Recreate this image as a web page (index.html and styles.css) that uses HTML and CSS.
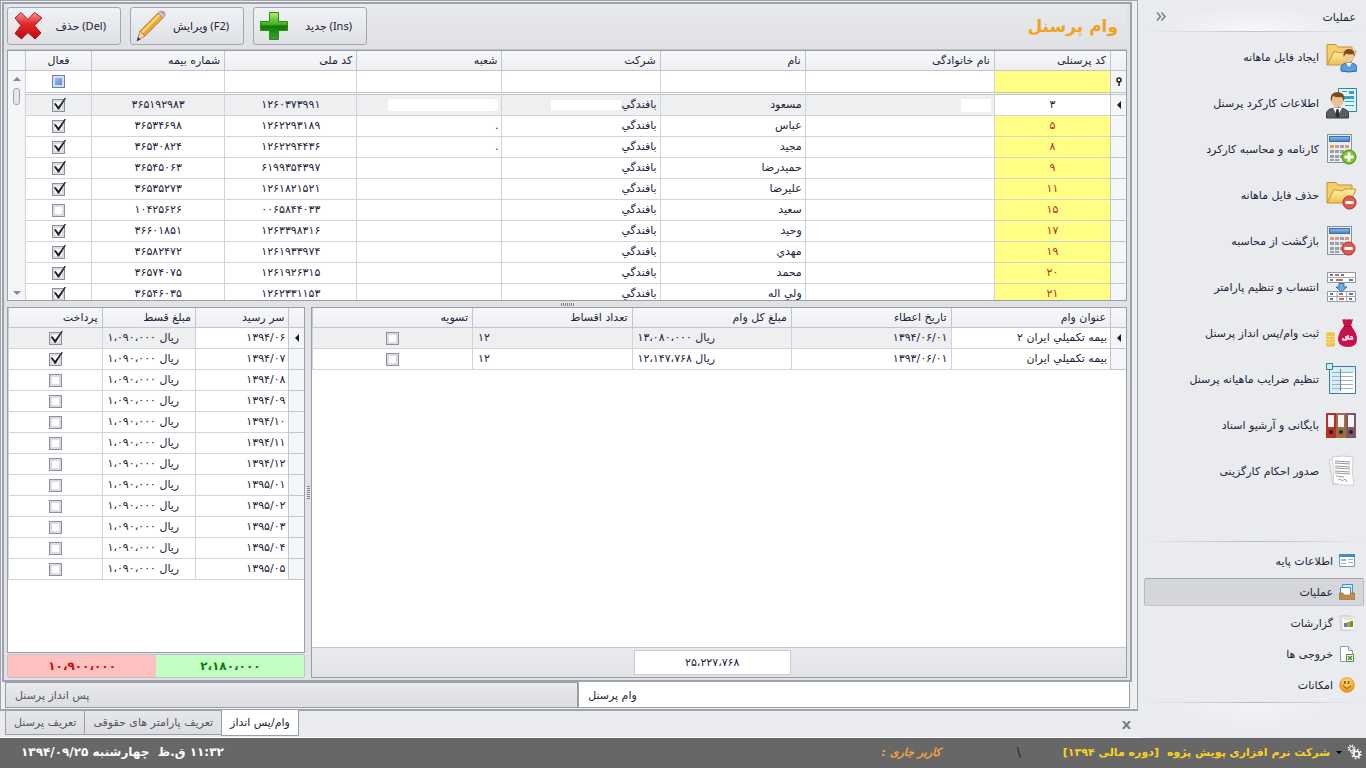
FILE: index.html
```html
<!DOCTYPE html>
<html lang="fa" dir="rtl">
<head>
  <meta charset="UTF-8" />
  <meta name="viewport" content="width=device-width, initial-scale=1.0" />
  <title>وام پرسنل</title>
  <link rel="stylesheet" href="styles.css">
</head>
<body>

  <svg class="defs" aria-hidden="true">
    <defs>
      <linearGradient id="gFolder" x1="0" y1="0" x2="0" y2="1"><stop offset="0" stop-color="#fdf0ae"/><stop offset="1" stop-color="#efc04c"/></linearGradient>
      <linearGradient id="gGreen" x1="0" y1="0" x2="0" y2="1"><stop offset="0" stop-color="#b5ee70"/><stop offset=".45" stop-color="#3fae1c"/><stop offset=".5" stop-color="#0f7a06"/><stop offset="1" stop-color="#3aa52a"/></linearGradient>
      <linearGradient id="gRed" x1="0" y1="0" x2="0" y2="1"><stop offset="0" stop-color="#f79a9a"/><stop offset=".4" stop-color="#e32c2c"/><stop offset="1" stop-color="#c40808"/></linearGradient>
      <linearGradient id="gBlue" x1="0" y1="0" x2="0" y2="1"><stop offset="0" stop-color="#8dc0f0"/><stop offset="1" stop-color="#3f7fc6"/></linearGradient>
      <radialGradient id="gSmile" cx=".5" cy=".3" r=".7"><stop offset="0" stop-color="#ffe27a"/><stop offset="1" stop-color="#ee8a12"/></radialGradient>
      <symbol id="folder" viewBox="0 0 32 32">
        <path d="M2 24V3.500h9l2 2.500h14v6" fill="#f3cf69" stroke="#c2933a"/>
        <path d="M2 24 9 10.500l8 1.500 3-2h11l-6 14z" fill="url(#gFolder)" stroke="#c2933a"/>
      </symbol>
      <symbol id="calc" viewBox="0 0 32 32">
        <rect x="2.500" y="1.500" width="24" height="28" fill="#e9edf1" stroke="#8b949e"/>
        <rect x="4.500" y="3.500" width="20" height="5" fill="url(#gBlue)" stroke="#3f6f9f"/>
        <path d="M5 12h4v3H5zM15 12h4v3h-4zM5 17h4v3H5zM10 17h4v3h-4zM15 17h4v3h-4zM20 17h4v3h-4zM5 22h4v3H5zM10 22h4v3h-4zM15 22h4v3h-4zM5 26h4v2H5zM10 26h4v2h-4z" fill="#9aa0a8"/>
        <path d="M5 12h4v3H5zM10 12h4v3h-4zM20 12h4v3h-4z" fill="#e09a70"/>
      </symbol>
      <symbol id="minus" viewBox="0 0 16 16">
        <circle cx="8" cy="8" r="7" fill="#e2594c" stroke="#a8342c"/>
        <rect x="3.500" y="6.500" width="9" height="3" rx="1" fill="#fff"/>
      </symbol>
      <symbol id="plus" viewBox="0 0 16 16">
        <circle cx="8" cy="8" r="7" fill="#7cc326" stroke="#4a8a14"/>
        <path d="M6.500 3.500h3v3h3v3h-3v3h-3v-3h-3v-3h3z" fill="#fff"/>
      </symbol>
    </defs>
  </svg>

  <div class="app">

    <aside class="sidebar">
      <div class="sidebar-head">
        <h2>عملیات</h2>
        <button type="button" class="collapse" aria-label="جمع کردن">
          <svg width="10" height="9" viewBox="0 0 10 9"><path d="M1 .5 4.500 4.500 1 8.500M5.500.5 9 4.500 5.500 8.500" fill="none" stroke="#777b85" stroke-width="1.500"/></svg>
        </button>
      </div>

      <nav class="actions">
        <a href="#">
          <svg class="icon" viewBox="0 0 32 32"><use href="#folder" width="32" height="32"/><path d="M16 30v-4q1-4 8-4t8 4v4q-8 2-16 0z" fill="#5b9ee0" stroke="#2d65a8"/><path d="m21 22 3 4 3-4z" fill="#fff"/><circle cx="24" cy="15.500" r="5" fill="#f2c79a"/><path d="M18.500 16q-.5-8 5.500-8t5.500 8l-1.500-3q-4 1-7-.5z" fill="#7b4a1d"/></svg>
          <span>ایجاد فایل ماهانه</span>
        </a>
        <a href="#">
          <svg class="icon" viewBox="0 0 32 32"><path d="M13.500 1.500h18v23h-18z" fill="#dff4fb" stroke="#2d86a8"/><path d="M17 4h5v1h-5zM24 4h5v3h-5zM17 9h12v3H17zM20 14h9v1h-9zM20 18h9v1h-9z" fill="#2fa3c4"/><path d="M1.500 31v-5q1-5 11-5t11 5v5z" fill="#5a5d62" stroke="#3a3c40"/><path d="m8 21 4.500 8 4.500-8z" fill="#fff"/><path d="m11.500 22-1 7 2 2 2-2-1-7z" fill="#2b2d31"/><circle cx="12.500" cy="14" r="6" fill="#eebf91"/><path d="M6 15Q4 5 12.500 5T19 15l-2-5q-5 1-9-1z" fill="#7b4a1d"/></svg>
          <span>اطلاعات کارکرد پرسنل</span>
        </a>
        <a href="#">
          <svg class="icon" viewBox="0 0 32 32"><use href="#calc" width="32" height="32"/><use href="#plus" x="16" y="16" width="16" height="16"/></svg>
          <span>کارنامه و محاسبه کارکرد</span>
        </a>
        <a href="#">
          <svg class="icon" viewBox="0 0 32 32"><use href="#folder" width="32" height="32"/><use href="#minus" x="17" y="16" width="15" height="15"/></svg>
          <span>حذف فایل ماهانه</span>
        </a>
        <a href="#">
          <svg class="icon" viewBox="0 0 32 32"><use href="#calc" width="32" height="32"/><use href="#minus" x="16" y="16" width="15" height="15"/></svg>
          <span>بازگشت از محاسبه</span>
        </a>
        <a href="#">
          <svg class="icon" viewBox="0 0 32 32"><path d="M2.500 1.500h28v10h-28zM2.500 20.500h28v10h-28z" fill="#fff" stroke="#95989d"/><path d="M2 6.500h29M2 25.500h29M12 20v11M21.500 20v11" stroke="#a4a7ac"/><path d="M5 4h3M16 4h3M5 9h3M24 9h4M5 23h3M24 23h4M5 28h3M24 28h3" stroke="#234f7f" stroke-width="1.500"/><path d="M10 4h4M11 9h7M14 23h4M14 28h5" stroke="#b8392a" stroke-width="1.500"/><path d="M14 12.500h5v3.500h3l-5.500 5-5.500-5h3z" fill="#68aee3" stroke="#2f74ad"/></svg>
          <span>انتساب و تنظیم پارامتر</span>
        </a>
        <a href="#">
          <svg class="icon" viewBox="0 0 32 32"><path d="M1 16q4-2 9 0v13q-5 2-9 0z" fill="#efc746"/><path d="M1 19q4 2 9 0M1 22q4 2 9 0M1 25q4 2 9 0" fill="none" stroke="#f8e39a"/><path d="M17 2q2 1 3 0 2 1 4 0 2 1 4 0l-2 7q6 7 6 13 0 8-9 8t-10-7q0-7 6-14z" fill="#c8104c"/><path d="M19 9.500h8" stroke="#8e0833"/><path d="M18 21v2h3v-4M23 18v5M25 20q3-1 2.500 2H24" fill="none" stroke="#fff" stroke-width="1.500"/></svg>
          <span>ثبت وام/پس انداز پرسنل</span>
        </a>
        <a href="#">
          <svg class="icon" viewBox="0 0 32 32"><path d="M4.500 3.500h26v27h-26z" fill="#fff" stroke="#3d7d9b"/><path d="M5 4h25v5H5zM5 9h10v21H5z" fill="#d3edf9"/><path d="M7 9.500h21M7 13.500h21M7 17.500h21M7 21.500h21M7 25.500h21" stroke="#9db4bf"/><path d="M15.500 6v22" stroke="#6d8794"/><path d="M1.500.5h6v6h-6z" fill="#c6ecfb" stroke="#3d7d9b"/></svg>
          <span>تنظیم ضرایب ماهیانه پرسنل</span>
        </a>
        <a href="#">
          <svg class="icon" viewBox="0 0 32 32"><path d="M1 4h10v25H1z" fill="#b5302f"/><path d="M11 4h10v25H11z" fill="#9a7140"/><path d="M21 4h10v25H21z" fill="#7d566c"/><path d="M3 6h6v12H3zM13 6h6v12h-6zM23 6h6v12h-6z" fill="#f3f3f3"/><g fill="#2b2022"><circle cx="6" cy="23" r="2"/><circle cx="16" cy="23" r="2"/><circle cx="26" cy="23" r="2"/></g></svg>
          <span>بایگانی و آرشیو اسناد</span>
        </a>
        <a href="#">
          <svg class="icon" viewBox="0 0 32 32"><path d="m4 5 18-4 4 25-18 4z" fill="#f4f4f4" stroke="#c9cacc"/><path d="M7 2q11-2 21 0-2 14 1 28-12 1-21-2 2-12-1-26z" fill="#fff" stroke="#cfd0d2"/><path d="m10 6 15 1M10 8l15 1M10 11l15 1M10 13l15 1M10 16l15 1M10 18l15 1M11 21l8 1M13 25q2-2 3 0t4-1l2 3" fill="none" stroke="#999"/></svg>
          <span>صدور احکام کارگزینی</span>
        </a>
      </nav>

      <nav class="groups">
        <a href="#">
          <svg class="icon-sm" viewBox="0 0 16 16"><path d="M.5 1.500h15v12H.5z" fill="#fff" stroke="#7b9bb0"/><path d="M0 1h16v3H0z" fill="#3e90c4"/><path d="M2 6h5v2H2zM9 6h5v1H9zM9 9h5v1H9zM2 10h5v1H2z" fill="#9fb3c2"/></svg>
          <span>اطلاعات پایه</span>
        </a>
        <a href="#" class="active">
          <svg class="icon-sm" viewBox="0 0 16 16"><path d="M3.500.5h10v9h-10z" fill="#cfe8f8" stroke="#4a92c2"/><path d="M1.500 3.500h10v8h-10z" fill="#fff" stroke="#4a92c2"/><path d="M0 9h4l1 2h6l1-2h4v6.500H0z" fill="#c48a4c" stroke="#8f5f2d" stroke-width=".5"/></svg>
          <span>عملیات</span>
        </a>
        <a href="#">
          <svg class="icon-sm" viewBox="0 0 16 16"><path d="m0 1 11-1 1 15-10 1z" fill="#e4e4e4" stroke="#c0c0c0" stroke-width=".5"/><path d="M3 2h13v13H3z" fill="#fafafa" stroke="#b8b8b8" stroke-width=".5"/><path d="M5 8h3v4H5z" fill="#3a8fc0"/><path d="M8 7h3v5H8z" fill="#e08a2c"/><path d="M11 6h3v6h-3z" fill="#5ca03c"/><path d="M5 4h9" stroke="#c8c8c8"/></svg>
          <span>گزارشات</span>
        </a>
        <a href="#">
          <svg class="icon-sm" viewBox="0 0 16 16"><path d="M1.500.5h8l4 4v11h-12z" fill="#fff" stroke="#9a9da2"/><path d="M9.500.5v4h4" fill="#e8e8e8" stroke="#9a9da2"/><path d="M7.500 8.500h7v7h-7z" fill="#fff" stroke="#5a8f3a"/><path d="m9 10 4 4M13 10l-4 4" stroke="#4c8a2c" stroke-width="1.500"/></svg>
          <span>خروجی ها</span>
        </a>
        <a href="#">
          <svg class="icon-sm" viewBox="0 0 16 16"><circle cx="8" cy="8" r="7.500" fill="url(#gSmile)" stroke="#d98a1c" stroke-width=".5"/><path d="M4 8q3 6 8 1" fill="none" stroke="#8a4a08"/><path d="M6 4v3M9.500 4v3" stroke="#8a4a08" stroke-width="1.500"/></svg>
          <span>امکانات</span>
        </a>
      </nav>
      <div class="sidebar-foot"></div>
    </aside>

    <main class="main">
      <div class="window">
        <div class="frame">

          <header class="toolbar">
            <h1>وام پرسنل</h1>
            <div class="buttons">
              <button type="button" class="tool">
                <span>(Ins) جدید</span>
                <svg class="icon" viewBox="0 0 32 32"><path d="M11.500 2.500h9v9h9v9h-9v9h-9v-9h-9v-9h9z" fill="url(#gGreen)" stroke="#2c8a1a"/></svg>
              </button>
              <button type="button" class="tool">
                <span>(F2) ویرایش</span>
                <svg class="icon" viewBox="0 0 32 32"><path d="m2 31 3-10 5 5z" fill="#f3d6a4" stroke="#8a6a3a" stroke-width=".7"/><path d="m2 31 1-4 2.500 2.500z" fill="#333"/><path d="M5 21 23 3l5 5-18 18z" fill="#f3a62c" stroke="#a86d14" stroke-width=".7"/><path d="M7 22.500 24.500 5" stroke="#fddc8c" stroke-width="2"/><path d="m23 3 2-2 5 5-2 2z" fill="#c9ccd2" stroke="#888" stroke-width=".7"/><path d="m25 1 1-.5q5 0 4.500 4.500l-.5 1z" fill="#e48aa8"/></svg>
              </button>
              <button type="button" class="tool">
                <span>(Del) حذف</span>
                <svg class="icon" viewBox="0 0 32 32"><path d="m3 8 6-5.500 7 7 6.500-7L30 8l-7.500 7.500L29 23l-6 6-7-6.500L9.500 29 3 23.500l6-8z" fill="url(#gRed)" stroke="#a91515"/></svg>
              </button>
            </div>
          </header>

          <section class="personnel">
            <div class="grid-scroll">
              <table class="grid">
                <colgroup><col class="c-ind"><col class="c-code"><col class="c-family"><col class="c-name"><col class="c-company"><col class="c-branch"><col class="c-meli"><col class="c-bimeh"><col class="c-active"></colgroup>
                <thead>
                  <tr><th></th><th>کد پرسنلی</th><th>نام خانوادگی</th><th>نام</th><th>شرکت</th><th>شعبه</th><th>کد ملی</th><th>شماره بیمه</th><th class="mid">فعال</th></tr>
                  <tr class="filter">
                    <td class="ind"><svg width="6" height="9" viewBox="0 0 6 9"><circle cx="3" cy="3" r="2" fill="none" stroke="#222" stroke-width="1.500"/><path d="M3 4v5" stroke="#222" stroke-width="1.500"/></svg></td>
                    <td class="code"><input type="text" aria-label="فیلتر کد پرسنلی"></td>
                    <td><input type="text" aria-label="فیلتر نام خانوادگی"></td>
                    <td><input type="text" aria-label="فیلتر نام"></td>
                    <td><input type="text" aria-label="فیلتر شرکت"></td>
                    <td><input type="text" aria-label="فیلتر شعبه"></td>
                    <td><input type="text" aria-label="فیلتر کد ملی"></td>
                    <td><input type="text" aria-label="فیلتر شماره بیمه"></td>
                    <td class="mid"><input type="checkbox" class="mixed" aria-label="فیلتر فعال"></td>
                  </tr>
                </thead>
                <tbody>
                  <tr class="current"><td class="ind"><i class="arrow"></i></td><td class="code">۳</td><td class="hidden-name"><i class="blank"></i></td><td>مسعود</td><td>بافندگي<i class="blank"></i></td><td><i class="blank wide"></i></td><td class="mid">۱۲۶۰۳۷۳۹۹۱</td><td class="mid">۳۶۵۱۹۲۹۸۳</td><td class="mid"><input type="checkbox" aria-label="فعال" checked></td></tr>
                  <tr><td class="ind"></td><td class="code">۵</td><td></td><td>عباس</td><td>بافندگي</td><td>.</td><td class="mid">۱۲۶۲۲۹۳۱۸۹</td><td class="mid">۳۶۵۳۴۶۹۸</td><td class="mid"><input type="checkbox" aria-label="فعال" checked></td></tr>
                  <tr><td class="ind"></td><td class="code">۸</td><td></td><td>مجید</td><td>بافندگي</td><td>.</td><td class="mid">۱۲۶۲۲۹۴۴۳۶</td><td class="mid">۳۶۵۳۰۸۲۴</td><td class="mid"><input type="checkbox" aria-label="فعال" checked></td></tr>
                  <tr><td class="ind"></td><td class="code">۹</td><td></td><td>حمیدرضا</td><td>بافندگي</td><td></td><td class="mid">۶۱۹۹۳۵۴۳۹۷</td><td class="mid">۳۶۵۴۵۰۶۳</td><td class="mid"><input type="checkbox" aria-label="فعال" checked></td></tr>
                  <tr><td class="ind"></td><td class="code">۱۱</td><td></td><td>علیرضا</td><td>بافندگي</td><td></td><td class="mid">۱۲۶۱۸۲۱۵۲۱</td><td class="mid">۳۶۵۳۵۲۷۳</td><td class="mid"><input type="checkbox" aria-label="فعال" checked></td></tr>
                  <tr><td class="ind"></td><td class="code">۱۵</td><td></td><td>سعید</td><td>بافندگي</td><td></td><td class="mid">۰۰۶۵۸۴۴۰۳۳</td><td class="mid">۱۰۴۲۵۶۲۶</td><td class="mid"><input type="checkbox" aria-label="فعال"></td></tr>
                  <tr><td class="ind"></td><td class="code">۱۷</td><td></td><td>وحید</td><td>بافندگي</td><td></td><td class="mid">۱۲۶۳۳۹۸۳۱۶</td><td class="mid">۳۶۶۰۱۸۵۱</td><td class="mid"><input type="checkbox" aria-label="فعال" checked></td></tr>
                  <tr><td class="ind"></td><td class="code">۱۹</td><td></td><td>مهدي</td><td>بافندگي</td><td></td><td class="mid">۱۲۶۱۹۳۳۹۷۴</td><td class="mid">۳۶۵۸۲۴۷۲</td><td class="mid"><input type="checkbox" aria-label="فعال" checked></td></tr>
                  <tr><td class="ind"></td><td class="code">۲۰</td><td></td><td>محمد</td><td>بافندگي</td><td></td><td class="mid">۱۲۶۱۹۲۶۳۱۵</td><td class="mid">۳۶۵۷۴۰۷۵</td><td class="mid"><input type="checkbox" aria-label="فعال" checked></td></tr>
                  <tr><td class="ind"></td><td class="code">۲۱</td><td></td><td>ولي اله</td><td>بافندگي</td><td></td><td class="mid">۱۲۶۲۳۳۱۱۵۳</td><td class="mid">۳۶۵۴۶۰۳۵</td><td class="mid"><input type="checkbox" aria-label="فعال" checked></td></tr>
                </tbody>
              </table>
            </div>
            <div class="scrollbar">
              <div class="scroll-head"></div>
              <i class="up"></i>
              <i class="thumb"></i>
              <i class="down"></i>
            </div>
          </section>

          <div class="splitter"><i class="grip"></i></div>

          <div class="bottom">
            <section class="loans">
              <div class="grid-body">
                <table class="grid">
                  <colgroup><col class="c-ind"><col class="c-title"><col><col><col><col></colgroup>
                  <thead>
                    <tr><th></th><th>عنوان وام</th><th>تاریخ اعطاء</th><th>مبلغ کل وام</th><th>تعداد اقساط</th><th>تسویه</th></tr>
                  </thead>
                  <tbody>
                    <tr class="current"><td class="ind"><i class="arrow"></i></td><td class="focus">بیمه تکمیلي ایران ۲</td><td>۱۳۹۴/۰۶/۰۱</td><td class="end">ریال ۱۳،۰۸۰،۰۰۰</td><td class="end">۱۲</td><td class="mid"><input type="checkbox" aria-label="تسویه"></td></tr>
                    <tr><td class="ind"></td><td>بیمه تکمیلي ایران</td><td>۱۳۹۳/۰۶/۰۱</td><td class="end">ریال ۱۲،۱۴۷،۷۶۸</td><td class="end">۱۲</td><td class="mid"><input type="checkbox" aria-label="تسویه"></td></tr>
                  </tbody>
                </table>
              </div>
              <div class="loans-foot"><output>۲۵،۲۲۷،۷۶۸</output></div>
            </section>

            <div class="splitter-v"><i class="grip-v"></i></div>

            <section class="installments">
              <div class="grid-body">
                <table class="grid">
                  <colgroup><col class="c-ind"><col><col><col></colgroup>
                  <thead>
                    <tr><th></th><th>سر رسید</th><th>مبلغ قسط</th><th>پرداخت</th></tr>
                  </thead>
                  <tbody>
                    <tr class="current"><td class="ind"><i class="arrow"></i></td><td class="focus">۱۳۹۴/۰۶</td><td class="end">ریال ۱،۰۹۰،۰۰۰</td><td class="mid"><input type="checkbox" aria-label="پرداخت" checked></td></tr>
                    <tr><td class="ind"></td><td>۱۳۹۴/۰۷</td><td class="end">ریال ۱،۰۹۰،۰۰۰</td><td class="mid"><input type="checkbox" aria-label="پرداخت" checked></td></tr>
                    <tr><td class="ind"></td><td>۱۳۹۴/۰۸</td><td class="end">ریال ۱،۰۹۰،۰۰۰</td><td class="mid"><input type="checkbox" aria-label="پرداخت"></td></tr>
                    <tr><td class="ind"></td><td>۱۳۹۴/۰۹</td><td class="end">ریال ۱،۰۹۰،۰۰۰</td><td class="mid"><input type="checkbox" aria-label="پرداخت"></td></tr>
                    <tr><td class="ind"></td><td>۱۳۹۴/۱۰</td><td class="end">ریال ۱،۰۹۰،۰۰۰</td><td class="mid"><input type="checkbox" aria-label="پرداخت"></td></tr>
                    <tr><td class="ind"></td><td>۱۳۹۴/۱۱</td><td class="end">ریال ۱،۰۹۰،۰۰۰</td><td class="mid"><input type="checkbox" aria-label="پرداخت"></td></tr>
                    <tr><td class="ind"></td><td>۱۳۹۴/۱۲</td><td class="end">ریال ۱،۰۹۰،۰۰۰</td><td class="mid"><input type="checkbox" aria-label="پرداخت"></td></tr>
                    <tr><td class="ind"></td><td>۱۳۹۵/۰۱</td><td class="end">ریال ۱،۰۹۰،۰۰۰</td><td class="mid"><input type="checkbox" aria-label="پرداخت"></td></tr>
                    <tr><td class="ind"></td><td>۱۳۹۵/۰۲</td><td class="end">ریال ۱،۰۹۰،۰۰۰</td><td class="mid"><input type="checkbox" aria-label="پرداخت"></td></tr>
                    <tr><td class="ind"></td><td>۱۳۹۵/۰۳</td><td class="end">ریال ۱،۰۹۰،۰۰۰</td><td class="mid"><input type="checkbox" aria-label="پرداخت"></td></tr>
                    <tr><td class="ind"></td><td>۱۳۹۵/۰۴</td><td class="end">ریال ۱،۰۹۰،۰۰۰</td><td class="mid"><input type="checkbox" aria-label="پرداخت"></td></tr>
                    <tr><td class="ind"></td><td>۱۳۹۵/۰۵</td><td class="end">ریال ۱،۰۹۰،۰۰۰</td><td class="mid"><input type="checkbox" aria-label="پرداخت"></td></tr>
                  </tbody>
                </table>
              </div>
              <div class="totals">
                <output class="paid">۲،۱۸۰،۰۰۰</output>
                <output class="unpaid">۱۰،۹۰۰،۰۰۰</output>
              </div>
            </section>
          </div>
        </div>

        <div class="inner-tabs">
          <button type="button" class="active">وام پرسنل</button>
          <button type="button">پس انداز پرسنل</button>
        </div>
      </div>

      <div class="outer-tabs">
        <button type="button" class="close" aria-label="بستن">
          <svg width="9" height="8" viewBox="0 0 9 8"><path d="m1 0 7 8M8 0 1 8" stroke="#777b82" stroke-width="2"/></svg>
        </button>
        <div class="tabs">
          <button type="button" class="active">وام/پس انداز</button>
          <button type="button">تعریف پارامتر های حقوقی</button>
          <button type="button">تعریف پرسنل</button>
        </div>
      </div>
    </main>
  </div>

  <footer class="status">
    <button type="button" class="gear" aria-label="تنظیمات">
      <svg width="15" height="16" viewBox="0 0 15 16"><g fill="none" stroke="#fff"><circle cx="4.500" cy="4.500" r="2" stroke-width="1"/><circle cx="4.500" cy="4.500" r="3.200" stroke-width="1.500" stroke-dasharray="1.200 1.310"/><circle cx="9.500" cy="10" r="2.800" stroke-width="1.600"/><circle cx="9.500" cy="10" r="4.500" stroke-width="1.600" stroke-dasharray="1.600 1.930"/></g></svg>
      <i class="caret"></i>
    </button>
    <span class="company">شرکت نرم افزاری پویش پژوه</span>
    <span class="period">[دوره مالی ۱۳۹۴]</span>
    <span class="slash">\</span>
    <span class="user">کاربر جاری :</span>
    <span class="clock">۱۱:۳۲ ق.ظ&nbsp; چهارشنبه ۱۳۹۴/۰۹/۲۵</span>
  </footer>

</body>
</html>
```
FILE: styles.css
```css
* {
  box-sizing: border-box;
}
body {
  margin: 0;
  height: 100vh;
  display: flex;
  flex-direction: column;
  background: #eaebef;
  color: #23233a;
  font-family: "DejaVu Sans", Tahoma, sans-serif;
  font-size: 11px;
  overflow: hidden;
}
button, input {
  font: inherit;
  color: inherit;
}
button {
  cursor: pointer;
}
a {
  color: inherit;
  text-decoration: none;
}
h1, h2 {
  margin: 0;
}
i {
  display: block;
}
.defs {
  position: absolute;
  width: 0;
  height: 0;
}
.app {
  flex: 1;
  display: flex;
  min-height: 0;
}

/* sidebar */
.sidebar {
  width: 226px;
  flex: none;
  display: flex;
  flex-direction: column;
  padding: 0 2px 0 4px;
}
.sidebar-head {
  display: flex;
  justify-content: space-between;
  align-items: center;
  height: 32px;
  padding: 4px 8px 0;
  background: radial-gradient(ellipse at 50% 100%, #f7f7fa, #eaebef 60%);
  border-bottom: 1px solid;
  border-image: linear-gradient(90deg, #eaebef, #c4c6cd, #eaebef) 1;
}
.sidebar-head h2 {
  font-size: 11px;
  font-weight: normal;
}
.collapse {
  background: none;
  border: none;
  padding: 0 4px;
}
.icon {
  width: 32px;
  height: 32px;
  flex: none;
}
.icon-sm {
  width: 16px;
  height: 16px;
  flex: none;
}
.actions {
  flex: 1;
  padding: 2px 7px 0;
}
.actions a {
  display: flex;
  align-items: center;
  gap: 6px;
  height: 46px;
}
.groups {
  padding: 5px 0 0;
  border-top: 1px solid;
  border-image: linear-gradient(90deg, #eaebef, #b8bac2, #eaebef) 1;
}
.groups a {
  display: flex;
  align-items: center;
  gap: 6px;
  height: 28px;
  margin-bottom: 3px;
  padding: 0 8px;
  border: 1px solid transparent;
  border-radius: 2px;
}
.groups a.active {
  background: #d5d6dc;
  border-color: #a2a4ac #b9bbc2 #c4c6cc;
}
.sidebar-foot {
  height: 36px;
  border-top: 1px solid;
  border-image: linear-gradient(90deg, #eaebef, #b8bac2, #eaebef) 1;
  background: radial-gradient(ellipse at 50% 0, #f3f3f6, #eaebef 60%);
}

/* main window */
.main {
  flex: 1;
  display: flex;
  flex-direction: column;
  min-width: 0;
}
.window {
  flex: 1;
  display: flex;
  flex-direction: column;
  min-height: 0;
  margin-right: 2px;
  padding: 1px 5px 0 1px;
  border: 1px solid #a0a3ab;
  border-bottom-width: 2px;
  background: #eeeff2;
}
.frame {
  flex: 1;
  display: flex;
  flex-direction: column;
  min-height: 0;
  padding: 0 3px 2px;
  border: 2px solid #9ca3ac;
  background: #e1e2e6;
}
.toolbar {
  flex: none;
  display: flex;
  justify-content: space-between;
  align-items: center;
  height: 46px;
  padding: 0 9px 2px 0;
  border-bottom: 1px solid #bfc2c9;
  background: linear-gradient(#e8e9ec, #e0e1e5);
}
.toolbar h1 {
  color: #f2a21c;
  font-size: 17px;
}
.buttons {
  display: flex;
  gap: 9px;
}
.tool {
  display: flex;
  justify-content: space-between;
  align-items: center;
  width: 114px;
  height: 38px;
  padding: 0 14px 0 4px;
  border: 1px solid #a3a6ae;
  border-radius: 3px;
  background: linear-gradient(#f1f2f5, #dfe0e5);
  font-family: "Noto Sans", "DejaVu Sans", sans-serif;
}

/* grids */
.grid {
  width: 100%;
  table-layout: fixed;
  border-collapse: separate;
  border-spacing: 0;
}
.grid th, .grid td {
  height: 21px;
  padding: 0 3px;
  border-left: 1px solid #d3d4d9;
  border-bottom: 1px solid #d3d4d9;
  text-align: right;
  line-height: 16px;
  white-space: nowrap;
  overflow: hidden;
}
.grid th {
  height: 20px;
  padding: 0 4px;
  border-color: #c3c5cc;
  background: linear-gradient(#f7f8fa, #efeff3);
  font-weight: normal;
}
.grid .mid, .grid .code {
  text-align: center;
}
.grid td.end {
  text-align: left;
  padding-left: 5px;
}
.grid .ind {
  padding: 0;
  background: #f4f5f7;
  border-color: #c3c5cc;
}
.ind svg {
  display: block;
  margin: 0 auto;
}
.c-ind { width: 16px; }
.c-code { width: 116px; }
.c-family { width: 189px; }
.c-name { width: 145px; }
.c-company { width: 158px; }
.c-branch { width: 145px; }
.c-meli { width: 132px; }
.c-bimeh { width: 133px; }
.c-active { width: 66px; }
.grid .filter td {
  height: 24px;
  border-bottom: 3px double #c3c5cc;
}
.filter input[type="text"] {
  display: block;
  width: 100%;
  height: 18px;
  padding: 0;
  border: none;
  background: transparent;
  outline: none;
}
.code {
  background: #ffff85;
  color: #c81e1e;
}
.current td {
  background: #eeeff1;
}
.current td.code, .current td.focus {
  background: #fff;
  color: #23233a;
}
.arrow {
  width: 0;
  margin: 0 auto;
  border: 4px solid transparent;
  border-right-color: #1c1c24;
  border-left: none;
}
.blank {
  display: inline-block;
  width: 70px;
  height: 10px;
  background: #fff;
  vertical-align: middle;
}
.blank.wide {
  width: 110px;
  height: 12px;
  border-radius: 3px;
}
.hidden-name .blank {
  width: 30px;
  height: 13px;
}
input[type="checkbox"] {
  appearance: none;
  display: inline-block;
  position: relative;
  width: 13px;
  height: 13px;
  margin: 0;
  border: 1px solid #8d9099;
  background: #fff;
  box-shadow: inset 0 0 0 2px #dadce2;
  vertical-align: middle;
}
input[type="checkbox"]:checked::before {
  content: "";
  position: absolute;
  left: 1px;
  top: -2px;
  width: 12px;
  height: 12px;
  background: #1e1e2c;
  clip-path: polygon(0 52%, 14% 46%, 36% 76%, 92% 0, 100% 4%, 42% 100%, 32% 100%);
}
input[type="checkbox"].mixed {
  border-color: #6b80b0;
  background: linear-gradient(135deg, #b4ccf5, #4c78d0);
  box-shadow: inset 0 0 0 2px #d5dff3;
}

.personnel {
  flex: 250 1 0;
  display: flex;
  min-height: 0;
  border: 1px solid #9b9ea6;
  background: #fff;
}
.grid-scroll {
  flex: 1;
  min-width: 0;
  overflow: hidden;
}
.scrollbar {
  width: 17px;
  flex: none;
  display: flex;
  flex-direction: column;
  align-items: center;
  background: #f4f5f7;
}
.scroll-head {
  align-self: stretch;
  height: 20px;
  margin-bottom: 6px;
  border-bottom: 1px solid #c3c5cc;
}
.up, .down {
  border: 4px solid transparent;
}
.up {
  border-bottom-color: #85888f;
  border-top: none;
}
.down {
  margin: auto 0 5px;
  border-top-color: #85888f;
  border-bottom: none;
}
.thumb {
  width: 7px;
  height: 17px;
  margin-top: 7px;
  border: 1px solid #a0a3ab;
  border-radius: 3px;
  background: #e6e7eb;
}
.splitter {
  flex: none;
  display: flex;
  justify-content: center;
  align-items: center;
  height: 6px;
}
.grip {
  width: 13px;
  height: 3px;
  background: repeating-linear-gradient(90deg, #82858d 0 1px, #e1e2e6 1px 2px);
}
.splitter-v {
  flex: none;
  display: flex;
  justify-content: center;
  align-items: center;
  width: 6px;
}
.grip-v {
  width: 3px;
  height: 13px;
  background: repeating-linear-gradient(#82858d 0 1px, #e1e2e6 1px 2px);
}
.bottom {
  flex: 372 1 0;
  display: flex;
  min-height: 0;
}
.loans {
  flex: 815 1 0;
  display: flex;
  flex-direction: column;
  border: 1px solid #9b9ea6;
}
.grid-body {
  flex: 1;
  min-height: 0;
  overflow: hidden;
  background: #fff;
}
.loans-foot {
  display: flex;
  height: 30px;
  padding: 2px;
  justify-content: center;
  border-top: 1px solid #c3c5cc;
  background: linear-gradient(#e9eaed, #e2e3e7);
}
.loans-foot output {
  width: 157px;
  margin-right: 14px;
  border: 1px solid #c9cbd1;
  background: #fff;
  text-align: center;
  line-height: 24px;
}
.installments {
  flex: 299 1 0;
  display: flex;
  flex-direction: column;
}
.installments .grid-body {
  border: 1px solid #9b9ea6;
}
.totals {
  display: flex;
  height: 24px;
  margin-top: 1px;
  border: 1px solid #bfc2c9;
  border-radius: 2px;
}
.totals output {
  flex: 1;
  font-size: 12px;
  font-weight: bold;
  line-height: 22px;
  text-align: center;
}
.paid {
  background: #c2ffc2;
  color: #0d7a12;
}
.unpaid {
  background: #ffc0c0;
  color: #d00a0a;
}

/* tabs */
.inner-tabs {
  flex: none;
  display: flex;
  height: 27px;
  padding: 0 2px 1px 3px;
}
.inner-tabs button {
  flex: 573 1 0;
  padding: 0 9px;
  border: 1px solid #9b9ea6;
  background: linear-gradient(#e8e9ec, #dcdde2);
  color: #55565f;
  text-align: left;
}
.inner-tabs .active {
  flex-grow: 551;
  border-top-color: #fff;
  background: #fff;
  color: #23233a;
}
.outer-tabs {
  flex: none;
  display: flex;
  justify-content: space-between;
  align-items: flex-start;
  height: 27px;
  padding: 0 9px 0 5px;
  border-bottom: 1px solid #fff;
}
.tabs {
  display: flex;
}
.tabs button {
  height: 24px;
  padding: 0 8px;
  border: 1px solid #9b9ea6;
  border-top: none;
  border-right-width: 0;
  background: linear-gradient(#e6e7ea, #dcdde2);
  color: #55565f;
}
.tabs .active {
  height: 26px;
  margin-top: -1px;
  border-right-width: 1px;
  background: #fff;
  color: #23233a;
}
.close {
  padding: 8px 0 0;
  border: none;
  background: none;
}

/* status bar */
.status {
  flex: none;
  display: flex;
  align-items: center;
  height: 30px;
  padding: 0 4px 2px 21px;
  background: #676767;
  color: #fff;
  font-size: 12px;
  font-weight: bold;
  white-space: nowrap;
}
.gear {
  display: flex;
  align-items: center;
  gap: 5px;
  margin-left: 6px;
  padding: 0;
  border: none;
  background: none;
}
.caret {
  border: 3px solid transparent;
  border-top-color: #000;
  border-bottom: none;
}
.company, .period, .user {
  font-size: 11px;
}
.company, .period {
  color: #fbd324;
}
.period {
  margin-right: 8px;
}
.slash {
  margin-right: 42px;
  color: #222;
  font-weight: normal;
}
.user {
  margin-right: 76px;
  color: #f0a53a;
  font-style: italic;
}
.clock {
  margin-right: auto;
}
```
